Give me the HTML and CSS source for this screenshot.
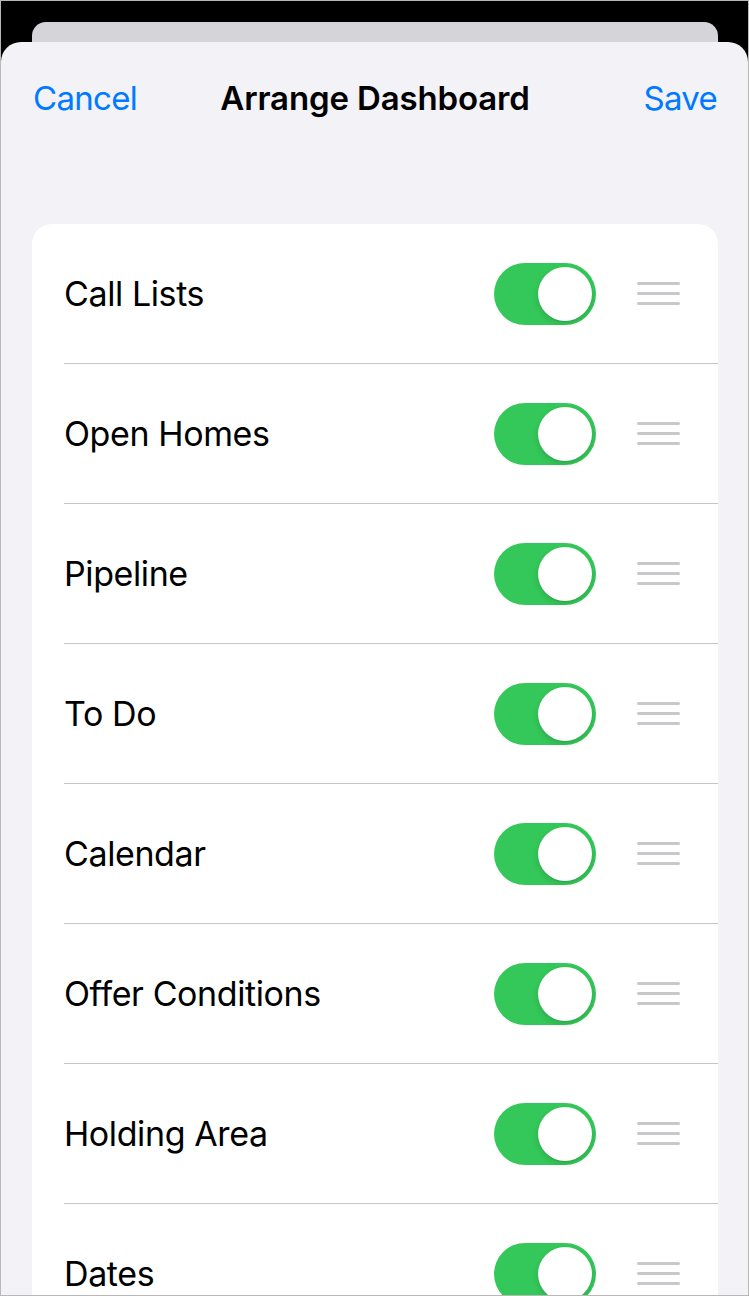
FILE: index.html
```html
<!DOCTYPE html>
<html lang="en">

<head>
    <meta charset="UTF-8">
    <meta name="viewport" content="width=device-width, initial-scale=1.0">
    <title>Arrange Dashboard</title>
    <link rel="stylesheet" href="styles.css">
</head>

<body>
    <div class="screen">
        <div class="back-sheet"></div>
        <div class="sheet">
            <div class="nav">
                <a class="nav-btn">Cancel</a>
                <h1 class="nav-title">Arrange Dashboard</h1>
                <a class="nav-btn save">Save</a>
            </div>

            <div class="card">
                <div class="row">
                    <span class="row-label">Call Lists</span>
                    <span class="toggle on"><span class="knob"></span></span>
                    <span class="handle"><i></i><i></i><i></i></span>
                </div>
                <div class="row">
                    <span class="row-label">Open Homes</span>
                    <span class="toggle on"><span class="knob"></span></span>
                    <span class="handle"><i></i><i></i><i></i></span>
                </div>
                <div class="row">
                    <span class="row-label">Pipeline</span>
                    <span class="toggle on"><span class="knob"></span></span>
                    <span class="handle"><i></i><i></i><i></i></span>
                </div>
                <div class="row">
                    <span class="row-label">To Do</span>
                    <span class="toggle on"><span class="knob"></span></span>
                    <span class="handle"><i></i><i></i><i></i></span>
                </div>
                <div class="row">
                    <span class="row-label">Calendar</span>
                    <span class="toggle on"><span class="knob"></span></span>
                    <span class="handle"><i></i><i></i><i></i></span>
                </div>
                <div class="row">
                    <span class="row-label">Offer Conditions</span>
                    <span class="toggle on"><span class="knob"></span></span>
                    <span class="handle"><i></i><i></i><i></i></span>
                </div>
                <div class="row">
                    <span class="row-label">Holding Area</span>
                    <span class="toggle on"><span class="knob"></span></span>
                    <span class="handle"><i></i><i></i><i></i></span>
                </div>
                <div class="row">
                    <span class="row-label">Dates</span>
                    <span class="toggle on"><span class="knob"></span></span>
                    <span class="handle"><i></i><i></i><i></i></span>
                </div>
            </div>
        </div>
    </div>
</body>

</html>
```

FILE: styles.css
```css
body {
    margin: 0;
    padding: 0;
    font-family: Inter, "Noto Sans", sans-serif;
    background-color: #fff;
}

.screen {
    width: 749px;
    height: 1296px;
    box-sizing: border-box;
    border: 1px solid #b8b8b8;
    background-color: #000;
    overflow: hidden;
    display: flex;
    flex-direction: column;
    padding-top: 21px;
}

.back-sheet {
    height: 20px;
    margin: 0 30px 0 31px;
    background-color: #d5d4d9;
    border-radius: 14px 14px 0 0;
    flex-shrink: 0;
}

.sheet {
    flex: 1;
    background-color: #f2f2f7;
    border-radius: 20px 20px 0 0;
}

.nav {
    height: 112px;
    display: grid;
    grid-template-columns: 1fr auto 1fr;
    align-items: center;
    padding: 0 31px 0 32px;
}

.nav-btn {
    color: #007aff;
    font-size: 33px;
    letter-spacing: -0.7px;
}

.nav-btn.save {
    justify-self: end;
}

.nav-title {
    margin: 0;
    font-size: 33px;
    font-weight: 600;
    letter-spacing: -0.15px;
    color: #000;
}

.card {
    margin: 70px 30px 0 31px;
    background-color: #fff;
    border-radius: 20px;
}

.row {
    height: 139px;
    margin-left: 32px;
    padding-right: 38px;
    border-bottom: 1px solid #c6c6c8;
    display: flex;
    align-items: center;
}

.row-label {
    flex: 1;
    font-size: 34px;
    letter-spacing: -0.4px;
    color: #000;
}

.toggle {
    width: 102px;
    height: 62px;
    border-radius: 31px;
    background-color: #34c759;
    position: relative;
    margin-right: 41px;
}

.knob {
    position: absolute;
    top: 4px;
    right: 4px;
    width: 54px;
    height: 54px;
    border-radius: 50%;
    background-color: #fff;
    box-shadow: 0 3px 6px rgba(0, 0, 0, 0.12), 0 1px 1px rgba(0, 0, 0, 0.08);
}

.handle {
    width: 43px;
    display: flex;
    flex-direction: column;
    gap: 7px;
}

.handle i {
    display: block;
    height: 3px;
    border-radius: 2px;
    background-color: #c7c7cc;
}
```
